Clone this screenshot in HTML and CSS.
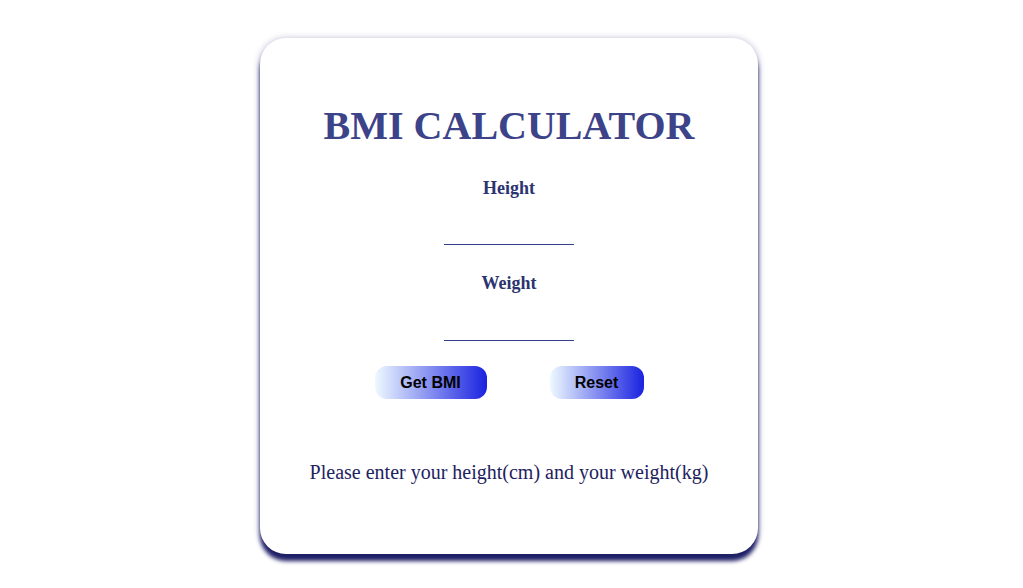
FILE: index.html
```html
<!DOCTYPE html>
<html>
<head>
<meta charset="utf-8">
<link rel="stylesheet" href="styles.css">
</head>
<body>
<div class="page">
  <div class="card">
    <h1 class="title">BMI CALCULATOR</h1>
    <label class="label" for="h">Height</label>
    <input class="field" id="h" type="text">
    <label class="label" for="w">Weight</label>
    <input class="field" id="w" type="text">
    <div class="buttons">
      <button class="btn btn-get">Get BMI</button>
      <button class="btn btn-reset">Reset</button>
    </div>
    <p class="message">Please enter your height(cm) and your weight(kg)</p>
  </div>
</div>
</body>
</html>
```
FILE: styles.css
```css
html, body {
  margin: 0;
  padding: 0;
  background: #ffffff;
}
body {
  font-family: "Liberation Serif", "Times New Roman", serif;
}
.page {
  display: flex;
  justify-content: center;
  align-items: flex-start;
  padding-top: 38px;
  padding-right: 5px;
  min-height: 588px;
  box-sizing: border-box;
}
.card {
  width: 498px;
  height: 516px;
  box-sizing: border-box;
  background: #fff;
  border-radius: 26px;
  box-shadow: 0 7px 4px 0 #1f1f66, 0 1px 6px 1px rgba(50, 50, 130, 0.3);
  display: flex;
  flex-direction: column;
  align-items: center;
  padding-top: 64px;
}
.title {
  margin: 0;
  font-size: 40px;
  font-weight: bold;
  color: #3c4389;
  line-height: 48px;
}
.label {
  font-size: 18px;
  font-weight: bold;
  color: #2b3370;
  margin-top: 27px;
  line-height: 22px;
}
.field {
  margin-top: 25px;
  width: 130px;
  height: 20px;
  border: none;
  border-bottom: 1px solid #34408f;
  outline: none;
  padding: 0;
  background: transparent;
}
.field + .label + .field {
  margin-top: 26px;
}
.buttons {
  display: flex;
  gap: 63px;
  margin-top: 25px;
}
.btn {
  height: 33px;
  border: none;
  border-radius: 12px;
  font-family: "Liberation Sans", Arial, sans-serif;
  font-weight: bold;
  font-size: 16px;
  color: #000;
  background: linear-gradient(to right, #eef9ff, #1a22e0);
  padding: 0;
}
.btn-get { width: 112px; }
.btn-reset { width: 94px; }
.message {
  margin: 61px 0 0;
  font-size: 20px;
  color: #1d2260;
  line-height: 24px;
}
```
